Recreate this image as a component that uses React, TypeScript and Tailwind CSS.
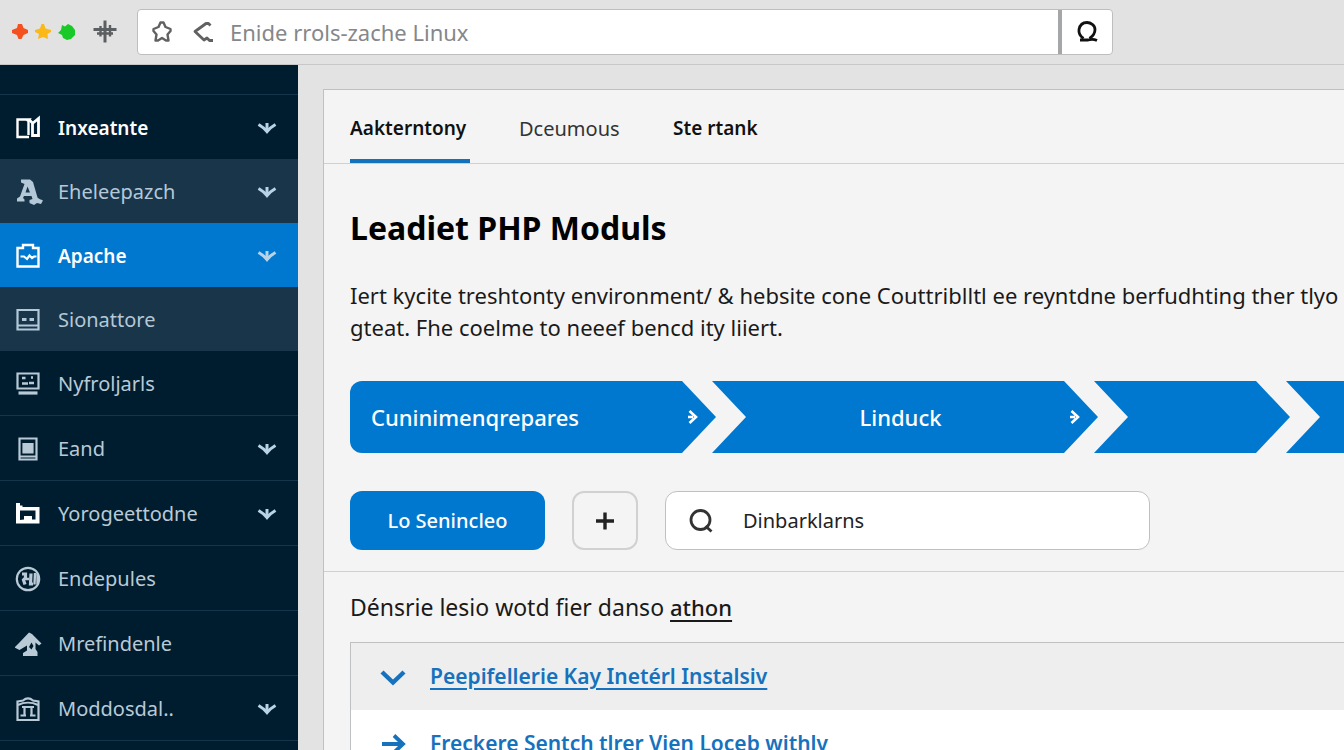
import React from 'react';
import clsx from 'clsx';

type IconProps = { className?: string };

const Caret = ({ className }: IconProps) => (
  <svg viewBox="0 0 20 14" className={className} fill="none" stroke="currentColor" strokeWidth="3">
    <path d="M1.5 3.5C4 5 7 6.5 10 10.5C13 6.5 16 5 18.5 3.5" />
    <path d="M10 2V10" strokeWidth="3" />
  </svg>
);

const BooksIcon = () => (
  <svg viewBox="0 0 26 26" className="size-[26px]" fill="none" stroke="currentColor" strokeWidth="2.4">
    <path d="M14 22H2.500V4.500H14L12 6.500M13.500 6V20" />
    <path d="M14 4.500L17.500 8V20.500H23.500V3.500L18 8" strokeWidth="2.800" />
  </svg>
);

const LetterIcon = () => (
  <svg viewBox="0 0 28 28" className="h-7 w-7 shrink-0" fill="currentColor">
    <path
      fillRule="evenodd"
      d="M6 1.500H15L18 4L22.500 19.500C24 21.500 26 21 28 22.500L26 26L22 25L19 27L14.500 25V22L17.500 21L16.500 18H9L8 20L9.500 21.500V23.500H2V20.500L5 18.500L9.500 6L6 4.500ZM12.500 8.500L10.500 14.500H15Z"
    />
  </svg>
);

const ClipboardIcon = () => (
  <svg viewBox="0 0 26 26" className="size-[26px]" fill="none" stroke="currentColor" strokeWidth="2.4">
    <path d="M2.500 5H8V2H18V5H23.500V23.500H2.500Z" />
    <path d="M5.500 13.500H9L12 16L14.500 12.500L17 15L19 13.500H21.500" strokeWidth="2.200" />
  </svg>
);

const DisplayIcon = () => (
  <svg viewBox="0 0 26 26" className="size-[26px]" fill="none" stroke="currentColor" strokeWidth="2.2">
    <path d="M2.500 3H23.500V22.500H2.500ZM2.500 18.500H23.500" />
    <path d="M7 12.500H11.500M14.500 12.500H19" strokeWidth="3" />
  </svg>
);

const MonitorIcon = () => (
  <svg viewBox="0 0 26 26" className="size-[26px]" fill="none" stroke="currentColor" strokeWidth="2.2">
    <path d="M2.500 2.500H23.500V17.500H2.500Z" />
    <path d="M3.500 22H22.500" strokeWidth="3.200" />
    <path d="M7 7H10.500M16 6.500H18M7 12.500H13M14 12H19" strokeWidth="2.600" />
  </svg>
);

const DeviceIcon = () => (
  <svg viewBox="0 0 26 26" className="size-[26px]" fill="none" stroke="currentColor" strokeWidth="2.2">
    <path d="M4.500 2.500H21.500V23.500H4.500ZM5 20.500H21" />
    <path d="M8.500 8H17.500V16.500H8.500Z" fill="currentColor" />
  </svg>
);

const FolderIcon = () => (
  <svg viewBox="0 0 26 26" className="size-[26px] text-white" fill="currentColor">
    <path
      fillRule="evenodd"
      d="M1 2H5V4.500H7.500V6H24.500V22.500H1ZM5 9.500V19L9 18.500V15H17V18.500H20.500V9.500Z"
    />
  </svg>
);

const BadgeIcon = () => (
  <svg viewBox="0 0 26 26" className="size-[26px]" fill="none" stroke="currentColor" strokeWidth="2.2">
    <circle cx="13" cy="13" r="11.200" />
    <path d="M7 8H10.500V12L8.500 14L10 18.500M16 7.500L15.500 18H18" strokeWidth="3.200" />
    <path d="M11 13H14M20 7L19.500 18.500M22.500 8V18" strokeWidth="2.400" />
  </svg>
);

const HomeIcon = () => (
  <svg viewBox="0 0 28 26" className="h-[26px] w-7 shrink-0" fill="currentColor">
    <path
      fillRule="evenodd"
      d="M-0.500 16.500L4 12L14 1.500L17 3L26.500 12.500L24 14.500L20.500 11.500V18L22.500 21V25H8V22L12 19.500V14.500L4.500 19ZM16.500 11.500L14 16L16.500 18.500L18.500 15Z"
    />
  </svg>
);

const BankIcon = () => (
  <svg viewBox="0 0 26 26" className="size-[26px]" fill="none" stroke="currentColor" strokeWidth="2.2">
    <path d="M2.500 5.500L8 4.500C11 2 15 2 18 4.500L23.500 5.500V24H2.500Z" />
    <path d="M3 9C9 6 17 6 23 9M7 11H19M9.500 11V19M16.500 11V19M5.500 19.500H11M15 19.500H20.500" />
  </svg>
);

const menu = [
  { label: 'Inxeatnte', icon: BooksIcon, caret: true, tone: 'bold' },
  { label: 'Eheleepazch', icon: LetterIcon, caret: true, tone: 'soft' },
  { label: 'Apache', icon: ClipboardIcon, caret: true, tone: 'active' },
  { label: 'Sionattore', icon: DisplayIcon, caret: false, tone: 'soft' },
  { label: 'Nyfroljarls', icon: MonitorIcon, caret: false, tone: 'plain' },
  { label: 'Eand', icon: DeviceIcon, caret: true, tone: 'plain' },
  { label: 'Yorogeettodne', icon: FolderIcon, caret: true, tone: 'plain' },
  { label: 'Endepules', icon: BadgeIcon, caret: false, tone: 'plain' },
  { label: 'Mrefindenle', icon: HomeIcon, caret: false, tone: 'plain' },
  { label: 'Moddosdal..', icon: BankIcon, caret: true, tone: 'plain' },
];

const TopBar = () => (
  <header className="flex h-[65px] shrink-0 items-center border-b border-[#c6c7c8] bg-[#e2e2e2] pl-3">
    <svg viewBox="0 0 64 20" className="h-5 w-16 shrink-0">
      <path fill="#f4511e" d="M6 2H10L11.500 6L16 8V11L11.500 13L9.500 17H6.500L5 13L0 11V8L5 6Z" />
      <path fill="#fbb917" d="M29.500 2H32L33.500 6.500L39 8V10L35.500 12L36 17L31 15L26 17L27 12L23 10V8L28 6.500Z" />
      <path fill="#18c927" d="M50 3L53 4.500L56 2L60 4L63 8V13L59 17L55 18L51 16L50 13L46 11L49 8Z" />
    </svg>
    <button aria-label="New" className="ml-[15px] flex w-7 shrink-0 justify-center text-[#5c5f62]">
      <svg viewBox="0 0 26 26" className="size-[26px]" fill="none" stroke="currentColor" strokeWidth="3">
        <path d="M1.500 10.500H24.500" />
        <path d="M13 1.500V23.500" />
        <path d="M5 14.500H21M8.500 7V17.500M18 6V17.500" strokeWidth="2.400" />
      </svg>
    </button>
    <form className="ml-[18px] flex h-[46px] w-[976px] rounded-sm border border-[#bdbebf] bg-white">
      <div className="flex flex-1 items-center pl-3 text-[#5f6163]">
        <svg viewBox="0 0 24 24" className="size-6 shrink-0" fill="none" stroke="currentColor" strokeWidth="2.400" strokeLinejoin="round">
          <path d="M10.500 2.500H13.500L15.500 7L20.500 9V11L17.500 14.500L18.500 20.500H16L12 18L8 20.500H5.500L6.500 14.500L3.500 11V9L8.500 7Z" />
        </svg>
        <svg viewBox="0 0 24 24" className="ml-[17px] size-6 shrink-0" fill="none" stroke="currentColor" strokeWidth="2.800">
          <path d="M19.500 5.500L17.500 3.500H15L4 11.500L13 20L16 18L18.500 20.500H22" strokeLinejoin="round" />
        </svg>
        <input
          aria-label="Address"
          placeholder="Enide rrols-zache Linux"
          className="ml-[15px] h-full min-w-0 flex-1 bg-transparent text-[22px] text-[#333] outline-none placeholder:text-[#85878a]"
        />
      </div>
      <button type="button" aria-label="Search" className="flex w-[54px] items-center justify-center border-l-4 border-[#a5a6a7] text-[#111]">
        <svg viewBox="0 0 24 24" className="size-6" fill="none" stroke="currentColor" strokeWidth="2.800">
          <path d="M8.500 18.500C5 16 3.500 13 4 9.500C5 4.500 8.500 2.500 12 2.500S20 5 20 9.500C20 13.500 17.500 16.500 14.500 18.500" />
          <path d="M5 20H13C16 19 19 19 22 20.500" />
        </svg>
      </button>
    </form>
  </header>
);

const Sidebar = () => (
  <nav className="w-[298px] shrink-0 overflow-hidden bg-[#001d30] pt-[29px]">
    <ul className="border-t border-[#14354a]">
      {menu.map(({ label, icon: Icon, caret, tone }) => (
        <li key={label}>
          <a
            href="#"
            className={clsx(
              'flex items-center pl-[15px] pr-[21px] pt-0.5',
              tone === 'bold' && 'h-16 text-[19px] font-semibold text-white',
              tone === 'soft' && 'h-16 bg-[#19354a] text-[20px] text-[#b4c8d8]',
              tone === 'active' && 'h-16 bg-[#0078d0] text-[19px] font-semibold text-white',
              tone === 'plain' && 'h-[65px] border-b border-[#14354a] text-[20px] text-[#b9cad6]'
            )}
          >
            <span className="flex w-[43px] shrink-0">
              <Icon />
            </span>
            <span className="flex-1">{label}</span>
            {caret && <Caret className="h-[14px] w-5 text-[#b9d3e6]" />}
          </a>
        </li>
      ))}
    </ul>
  </nav>
);

const StepArrow = () => (
  <svg viewBox="0 0 12 16" className="h-4 w-3" fill="none" stroke="currentColor" strokeWidth="2.600">
    <path d="M2.500 2L9 8L2.500 14M1 8H6" />
  </svg>
);

const Steps = () => (
  <ol className="flex h-[72px] shrink-0 text-[22px] font-medium text-white">
    <li className="flex w-[366px] shrink-0 items-center justify-between rounded-l-xl bg-[#0078d0] pl-[21px] pr-[17px] [clip-path:polygon(0_0,calc(100%-34px)_0,100%_50%,calc(100%-34px)_100%,0_100%)]">
      Cuninimenqrepares
      <StepArrow />
    </li>
    <li className="-ml-1 flex w-[386px] shrink-0 items-center bg-[#0078d0] pl-5 pr-[17px] [clip-path:polygon(0_0,calc(100%-34px)_0,100%_50%,calc(100%-34px)_100%,0_100%,34px_50%)]">
      <span className="flex-1 text-center">Linduck</span>
      <StepArrow />
    </li>
    <li className="-ml-1 w-[196px] shrink-0 bg-[#0078d0] [clip-path:polygon(0_0,calc(100%-34px)_0,100%_50%,calc(100%-34px)_100%,0_100%,34px_50%)]" />
    <li className="-ml-1 min-w-[60px] flex-1 bg-[#0078d0] [clip-path:polygon(0_0,100%_0,100%_100%,0_100%,34px_50%)]" />
  </ol>
);

const Panel = () => (
  <section className="flex min-w-0 flex-1 flex-col border-l border-t border-[#bfc0c1] bg-[#f4f4f4]">
    <div role="tablist" className="flex h-[74px] shrink-0 gap-[49px] border-b border-[#cfd0d1] pl-[26px] text-[#111]">
      <button role="tab" aria-selected="true" className="w-[120px] border-b-4 border-[#1272bb] pt-2 text-left text-[19px] font-semibold">
        Aakterntony
      </button>
      <button role="tab" aria-selected="false" className="w-[105px] pt-1 text-left text-[20px] text-[#333]">
        Dceumous
      </button>
      <button role="tab" aria-selected="false" className="pt-1 text-left text-[19px] font-semibold">
        Ste rtank
      </button>
    </div>

    <div className="shrink-0 border-b border-[#cfd0d1] pb-[21px] pl-[26px] pt-10">
      <h1 className="text-[32px] font-bold leading-12 text-black">Leadiet PHP Moduls</h1>
      <p className="mb-[38px] mt-[27px] whitespace-nowrap text-[22px] leading-8 text-[#1a1a1a]">
        Iert kycite treshtonty environment/ &amp; hebsite cone Couttriblltl ee reyntdne berfudhting ther tlyo
        <br />
        gteat. Fhe coelme to neeef bencd ity liiert.
      </p>
      <Steps />
      <div className="mt-[38px] flex h-[59px]">
        <button className="w-[195px] rounded-xl bg-[#0078d0] text-[20px] font-medium text-white">Lo Senincleo</button>
        <button aria-label="Add" className="ml-[27px] flex w-[66px] items-center justify-center rounded-xl border-2 border-[#d0d1d2] text-[#222]">
          <svg viewBox="0 0 20 20" className="size-5" fill="none" stroke="currentColor" strokeWidth="3.4">
            <path d="M1 10H19M10 1.500V18.500" />
          </svg>
        </button>
        <label className="ml-[27px] flex w-[485px] items-center rounded-xl border border-[#bfc0c1] bg-white pl-[23px]">
          <svg viewBox="0 0 24 24" className="size-6 shrink-0" fill="none" stroke="#333" strokeWidth="2.800">
            <circle cx="11.500" cy="11" r="9.500" />
            <path d="M16.500 17L22.500 22.500" />
          </svg>
          <input
            aria-label="Search modules"
            defaultValue="Dinbarklarns"
            className="ml-[30px] h-full min-w-0 flex-1 bg-transparent text-[20px] text-[#222] outline-none"
          />
        </label>
      </div>
    </div>

    <div className="pl-[26px]">
      <p className="flex h-[70px] items-center text-[23px] text-[#1a1a1a]">
        <span>
          Dénsrie lesio wotd fier danso{' '}
          <a href="#" className="text-[22px] font-medium underline decoration-2 underline-offset-4">
            athon
          </a>
        </span>
      </p>
      <ul className="border-l border-t border-[#bfc0c1] bg-white text-[21px] font-semibold text-[#1672bd]">
        <li className="flex h-[67px] items-center bg-[#eeeeef] pl-[29px]">
          <svg viewBox="0 0 26 26" className="size-[26px]" fill="none" stroke="currentColor" strokeWidth="4.4">
            <path d="M2 8L13 18.500L24 8" />
          </svg>
          <a href="#" className="ml-6 underline decoration-2 underline-offset-4">
            Peepifellerie Kay Inetérl Instalsiv
          </a>
        </li>
        <li className="flex h-[67px] items-center pl-[29px]">
          <svg viewBox="0 0 26 26" className="size-[26px]" fill="none" stroke="currentColor" strokeWidth="3.800">
            <path d="M2 13H23M14 4.500L23 13L14 21.500" />
          </svg>
          <a href="#" className="ml-6">
            Freckere Sentch tlrer Vien Loceb withlv
          </a>
        </li>
      </ul>
    </div>
  </section>
);

export default function App() {
  return (
    <div className="flex h-screen flex-col overflow-hidden bg-[#e3e3e3] font-['Noto_Sans','Open_Sans',sans-serif]">
      <TopBar />
      <div className="flex min-h-0 flex-1">
        <Sidebar />
        <main className="flex min-w-0 flex-1 overflow-hidden pl-[25px] pt-6">
          <Panel />
        </main>
      </div>
    </div>
  );
}
